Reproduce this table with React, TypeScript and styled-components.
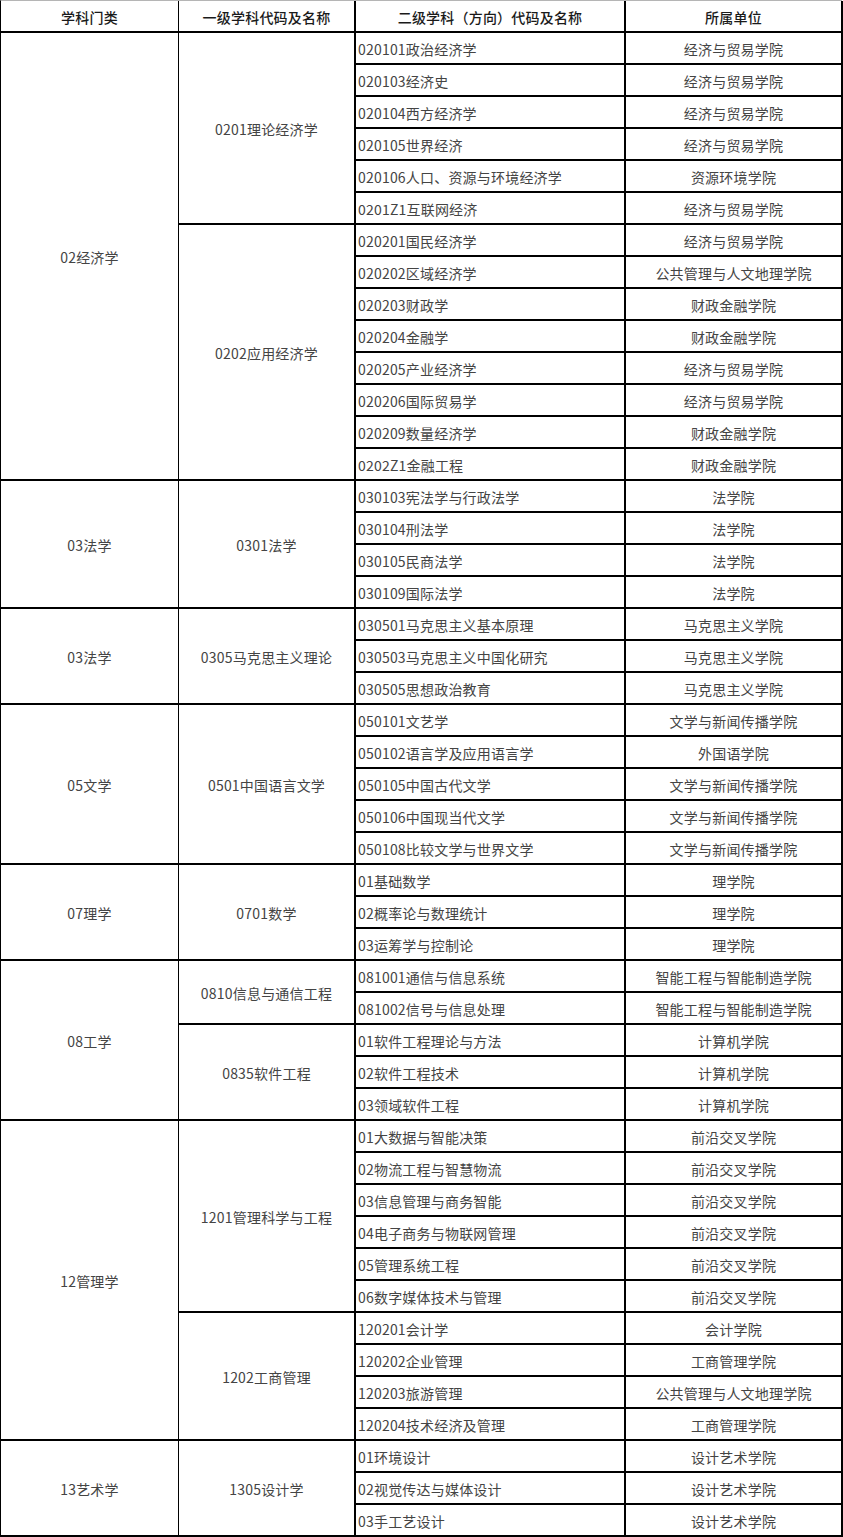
import { Fragment } from "react";
import styled, { createGlobalStyle } from "styled-components";

type Sub = { code: string; rows: [string, string][] };
type Group = { category: string; subs: Sub[] };

const data: Group[] = [
    {
        category: "02经济学",
        subs: [
            {
                code: "0201理论经济学",
                rows: [
                    ["020101政治经济学", "经济与贸易学院"],
                    ["020103经济史", "经济与贸易学院"],
                    ["020104西方经济学", "经济与贸易学院"],
                    ["020105世界经济", "经济与贸易学院"],
                    ["020106人口、资源与环境经济学", "资源环境学院"],
                    ["0201Z1互联网经济", "经济与贸易学院"],
                ],
            },
            {
                code: "0202应用经济学",
                rows: [
                    ["020201国民经济学", "经济与贸易学院"],
                    ["020202区域经济学", "公共管理与人文地理学院"],
                    ["020203财政学", "财政金融学院"],
                    ["020204金融学", "财政金融学院"],
                    ["020205产业经济学", "经济与贸易学院"],
                    ["020206国际贸易学", "经济与贸易学院"],
                    ["020209数量经济学", "财政金融学院"],
                    ["0202Z1金融工程", "财政金融学院"],
                ],
            },
        ],
    },
    {
        category: "03法学",
        subs: [
            {
                code: "0301法学",
                rows: [
                    ["030103宪法学与行政法学", "法学院"],
                    ["030104刑法学", "法学院"],
                    ["030105民商法学", "法学院"],
                    ["030109国际法学", "法学院"],
                ],
            },
        ],
    },
    {
        category: "03法学",
        subs: [
            {
                code: "0305马克思主义理论",
                rows: [
                    ["030501马克思主义基本原理", "马克思主义学院"],
                    ["030503马克思主义中国化研究", "马克思主义学院"],
                    ["030505思想政治教育", "马克思主义学院"],
                ],
            },
        ],
    },
    {
        category: "05文学",
        subs: [
            {
                code: "0501中国语言文学",
                rows: [
                    ["050101文艺学", "文学与新闻传播学院"],
                    ["050102语言学及应用语言学", "外国语学院"],
                    ["050105中国古代文学", "文学与新闻传播学院"],
                    ["050106中国现当代文学", "文学与新闻传播学院"],
                    ["050108比较文学与世界文学", "文学与新闻传播学院"],
                ],
            },
        ],
    },
    {
        category: "07理学",
        subs: [
            {
                code: "0701数学",
                rows: [
                    ["01基础数学", "理学院"],
                    ["02概率论与数理统计", "理学院"],
                    ["03运筹学与控制论", "理学院"],
                ],
            },
        ],
    },
    {
        category: "08工学",
        subs: [
            {
                code: "0810信息与通信工程",
                rows: [
                    ["081001通信与信息系统", "智能工程与智能制造学院"],
                    ["081002信号与信息处理", "智能工程与智能制造学院"],
                ],
            },
            {
                code: "0835软件工程",
                rows: [
                    ["01软件工程理论与方法", "计算机学院"],
                    ["02软件工程技术", "计算机学院"],
                    ["03领域软件工程", "计算机学院"],
                ],
            },
        ],
    },
    {
        category: "12管理学",
        subs: [
            {
                code: "1201管理科学与工程",
                rows: [
                    ["01大数据与智能决策", "前沿交叉学院"],
                    ["02物流工程与智慧物流", "前沿交叉学院"],
                    ["03信息管理与商务智能", "前沿交叉学院"],
                    ["04电子商务与物联网管理", "前沿交叉学院"],
                    ["05管理系统工程", "前沿交叉学院"],
                    ["06数字媒体技术与管理", "前沿交叉学院"],
                ],
            },
            {
                code: "1202工商管理",
                rows: [
                    ["120201会计学", "会计学院"],
                    ["120202企业管理", "工商管理学院"],
                    ["120203旅游管理", "公共管理与人文地理学院"],
                    ["120204技术经济及管理", "工商管理学院"],
                ],
            },
        ],
    },
    {
        category: "13艺术学",
        subs: [
            {
                code: "1305设计学",
                rows: [
                    ["01环境设计", "设计艺术学院"],
                    ["02视觉传达与媒体设计", "设计艺术学院"],
                    ["03手工艺设计", "设计艺术学院"],
                ],
            },
        ],
    },
];

const GlobalStyle = createGlobalStyle`
    body {
        margin: 0;
        background: #fff;
        font-family: "Noto Sans CJK SC", "Noto Sans", sans-serif;
    }
`;

const Grid = styled.div`
    display: grid;
    grid-template-columns: 178px 177px 270px 217px;
    grid-auto-rows: 32px;
    width: 842px;
    border-top: 1px solid #b5b5b5;
    border-left: 1px solid #000;
    box-sizing: border-box;
`;

const Cell = styled.div<{ $col: number; $span?: number; $head?: boolean; $left?: boolean }>`
    grid-column: ${(p) => p.$col};
    grid-row: span ${(p) => p.$span ?? 1};
    display: flex;
    align-items: center;
    justify-content: ${(p) => (p.$left ? "flex-start" : "center")};
    padding: 1px 0 0 ${(p) => (p.$left ? "2px" : "0")};
    box-sizing: border-box;
    border-bottom: 2px solid #000;
    border-right: ${(p) => (p.$col === 1 ? "1px" : "2px")} solid #000;
    font-size: 14px;
    color: ${(p) => (p.$head ? "#1a1a1a" : "#444")};
    font-weight: ${(p) => (p.$head ? 500 : 400)};
    white-space: nowrap;
    letter-spacing: 0.2px;
`;

export default function App() {
    return (
        <>
            <GlobalStyle />
            <Grid>
                <Cell $col={1} $head>学科门类</Cell>
                <Cell $col={2} $head>一级学科代码及名称</Cell>
                <Cell $col={3} $head>二级学科（方向）代码及名称</Cell>
                <Cell $col={4} $head>所属单位</Cell>
                {data.map((g, gi) => {
                    const total = g.subs.reduce((n, s) => n + s.rows.length, 0);
                    return g.subs.map((s, si) =>
                        s.rows.map((r, ri) => (
                            <Fragment key={`${gi}-${si}-${ri}`}>
                                {si === 0 && ri === 0 && (
                                    <Cell $col={1} $span={total}>
                                        {g.category}
                                    </Cell>
                                )}
                                {ri === 0 && (
                                    <Cell $col={2} $span={s.rows.length}>
                                        {s.code}
                                    </Cell>
                                )}
                                <Cell $col={3} $left>{r[0]}</Cell>
                                <Cell $col={4}>{r[1]}</Cell>
                            </Fragment>
                        ))
                    );
                })}
            </Grid>
        </>
    );
}
